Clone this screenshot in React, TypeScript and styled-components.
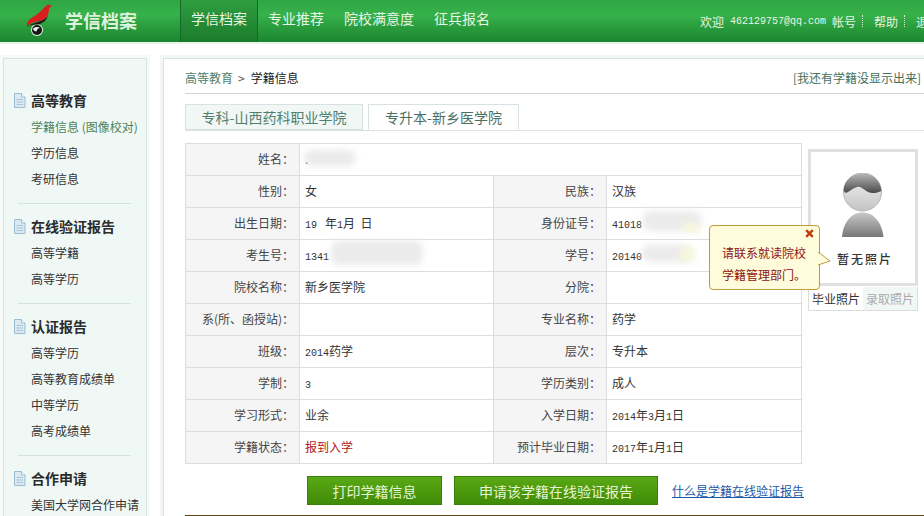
import styled, { createGlobalStyle } from "styled-components";

const sideGroups = [
  { title: "高等教育", items: ["学籍信息 (图像校对)", "学历信息", "考研信息"] },
  { title: "在线验证报告", items: ["高等学籍", "高等学历"] },
  { title: "认证报告", items: ["高等学历", "高等教育成绩单", "中等学历", "高考成绩单"] },
  { title: "合作申请", items: ["美国大学网合作申请"] },
];

const DocIcon = () => (
  <svg width="13" height="15" viewBox="0 0 13 15">
    <path d="M1.5 .5H8.5L12 4V14.5H1.5Z" fill="#dbe9f2" stroke="#9dbdd2" />
    <path d="M8.5 .5V4H12" fill="#fff" stroke="#9dbdd2" />
    <path d="M3.5 6.5H10M3.5 9H10M3.5 11.5H10" stroke="#a9c5d8" />
  </svg>
);

const Logo = () => (
  <svg width="32" height="32" viewBox="0 0 32 32">
    <circle cx="15" cy="26" r="6" fill="#dff0df" />
    <path d="M25 1C27 .5 29 1.5 30 2L27 4C27 9 26 13 21 16C15 18 8 18 5 23C4 16 10 14 14 11C19 8 21 4 25 1Z" fill="#d81e1e" />
    <path d="M5 23C9 19 15 19 21 16C24 14.5 25 13 26 11C25 16 21 20 15 20.5C11 20.8 8 21 5 23Z" fill="#1a1a1a" />
    <circle cx="15" cy="26" r="5" fill="#151515" />
    <path d="M11 25C12.5 22.8 16 22.5 18 24C16 24 15 25.5 14.5 27.5C13 27.5 11.5 26.5 11 25Z" fill="#f2f2f2" />
  </svg>
);

const Avatar = () => (
  <svg width="44" height="64" viewBox="0 0 44 64">
    <defs>
      <linearGradient id="face" x1="0" y1="0" x2="0" y2="1">
        <stop offset="0" stopColor="#f4f4f4" />
        <stop offset="1" stopColor="#c4c4c4" />
      </linearGradient>
      <linearGradient id="hair" x1="0" y1="0" x2="0" y2="1">
        <stop offset="0" stopColor="#b8b8b8" />
        <stop offset="1" stopColor="#4a4a4a" />
      </linearGradient>
      <linearGradient id="torso" x1="0" y1="0" x2="0" y2="1">
        <stop offset="0" stopColor="#c8c8c8" />
        <stop offset="1" stopColor="#777" />
      </linearGradient>
    </defs>
    <circle cx="21.5" cy="19" r="19" fill="url(#face)" stroke="#b5b5b5" />
    <path d="M2.6 17C3.5 7 12 .3 21.5 .3C31 .3 39.5 7 40.4 18C36 20 31 21 27 19C23 17 20 13 16 14C12 15 8 19 5 20C4 19.5 3 18.5 2.6 17Z" fill="url(#hair)" />
    <path d="M1 64C2 50 10 39.5 21.5 39.5C33 39.5 41 50 42.5 64Z" fill="url(#torso)" />
  </svg>
);

const CloseIcon = () => (
  <svg width="9" height="9" viewBox="0 0 9 9">
    <path d="M1.2 1.2L7.8 7.8M7.8 1.2L1.2 7.8" stroke="#c23a10" strokeWidth="2.4" />
  </svg>
);

const TipArrowIcon = () => (
  <svg width="13" height="14" viewBox="0 0 13 14">
    <path d="M0 0L12 9L0 13Z" fill="#fffcdc" />
    <path d="M0 0L12 9L0 13" fill="none" stroke="#c29a3c" />
  </svg>
);

const App = () => {
  const rows = [
    ["性别：", "女", "民族：", "汉族"],
    ["出生日期：", <><Num>19</Num>&nbsp;&nbsp;&nbsp;年<Num>1</Num>月&nbsp;&nbsp;日</>, "身份证号：", <Num>41018</Num>],
    ["考生号：", <Num>1341</Num>, "学号：", <Num>20140</Num>],
    ["院校名称：", "新乡医学院", "分院：", ""],
    ["系(所、函授站)：", "", "专业名称：", "药学"],
    ["班级：", <><Num>2014</Num>药学</>, "层次：", "专升本"],
    ["学制：", <Num>3</Num>, "学历类别：", "成人"],
    ["学习形式：", "业余", "入学日期：", <><Num>2014</Num>年<Num>3</Num>月<Num>1</Num>日</>],
    ["学籍状态：", <Status>报到入学</Status>, "预计毕业日期：", <><Num>2017</Num>年<Num>1</Num>月<Num>1</Num>日</>],
  ];

  return (
    <Page>
      <GlobalStyle />
      <Header>
        <Brand>
          <Logo />
          <BrandName>学信档案</BrandName>
        </Brand>
        <Nav>
          <NavItem $active>学信档案</NavItem>
          <NavItem>专业推荐</NavItem>
          <NavItem>院校满意度</NavItem>
          <NavItem>征兵报名</NavItem>
        </Nav>
        <UserBar>
          <span>欢迎</span>
          <Email>462129757@qq.com</Email>
          <span>帐号</span>
          <Sep />
          <span>帮助</span>
          <Sep />
          <span>退出</span>
        </UserBar>
      </Header>

      <Body>
        <SideOuter>
          <Side>
            {sideGroups.map((group, index) => (
              <SideGroup key={index} $last={index === sideGroups.length - 1}>
                <SideTitle>
                  <DocIcon />
                  {group.title}
                </SideTitle>
                {group.items.map((item, i) => (
                  <SideItem key={i} $active={index === 0 && i === 0}>
                    {item}
                  </SideItem>
                ))}
              </SideGroup>
            ))}
          </Side>
        </SideOuter>

        <MainOuter>
          <Main>
            <Crumbs>
              <CrumbPath>
                高等教育<CrumbArrow>&gt;</CrumbArrow>
                <CrumbCurrent>学籍信息</CrumbCurrent>
              </CrumbPath>
              <MissingLink>[我还有学籍没显示出来]</MissingLink>
            </Crumbs>
            <Tabs>
              <Tab>专科-山西药科职业学院</Tab>
              <Tab $active>专升本-新乡医学院</Tab>
            </Tabs>

            <InfoRow>
              <TableWrap>
                <InfoTable>
                  <colgroup>
                    <col width={114} />
                    <col width={194} />
                    <col width={113} />
                    <col width={195} />
                  </colgroup>
                  <tbody>
                    <tr>
                      <Label>姓名：</Label>
                      <Value colSpan={3}>.</Value>
                    </tr>
                    {rows.map((row, index) => (
                      <tr key={index}>
                        <Label>{row[0]}</Label>
                        <Value>{row[1]}</Value>
                        <Label>{row[2]}</Label>
                        <Value>{row[3]}</Value>
                      </tr>
                    ))}
                  </tbody>
                </InfoTable>
                <Smudge style={{ left: 119, top: 7, width: 52, height: 16 }} />
                <Smudge style={{ left: 458, top: 68, width: 58, height: 20 }} />
                <YellowSmudge style={{ left: 497, top: 80, width: 18, height: 9 }} />
                <Smudge style={{ left: 146, top: 98, width: 92, height: 24 }} />
                <Smudge style={{ left: 457, top: 102, width: 50, height: 17 }} />
                <YellowSmudge style={{ left: 494, top: 104, width: 16, height: 15 }} />
              </TableWrap>

              <PhotoColumn>
                <PhotoFrame>
                  <Avatar />
                  <NoPhoto>暂无照片</NoPhoto>
                </PhotoFrame>
                <PhotoTabs>
                  <PhotoTab $active>毕业照片</PhotoTab>
                  <PhotoTab>录取照片</PhotoTab>
                </PhotoTabs>
                <Tip>
                  <TipClose>
                    <CloseIcon />
                  </TipClose>
                  <TipArrow>
                    <TipArrowIcon />
                  </TipArrow>
                  请联系就读院校
                  <br />
                  学籍管理部门。
                </Tip>
              </PhotoColumn>
            </InfoRow>

            <Actions>
              <ActionButton $width={135}>打印学籍信息</ActionButton>
              <ActionButton $width={204}>申请该学籍在线验证报告</ActionButton>
              <HelpLink>什么是学籍在线验证报告</HelpLink>
            </Actions>
            <BottomRule />
          </Main>
        </MainOuter>
      </Body>
    </Page>
  );
};

export default App;

const cjk = `"Noto Sans CJK SC", "Liberation Sans", sans-serif`;

const GlobalStyle = createGlobalStyle`
  html, body {
    margin: 0;
    padding: 0;
    background: #fff;
    overflow: hidden;
    font-family: ${cjk};
    font-size: 12px;
    color: #333;
  }
`;

const Page = styled.div`
  width: 924px;
  height: 516px;
  overflow: hidden;
`;

const Header = styled.header`
  display: flex;
  height: 42px;
  background: linear-gradient(#2fa544 0%, #37b24a 35%, #2a9c3d 65%, #1b8630 100%);
  box-shadow: 0 2px 0 #e9f6eb;
`;

const Brand = styled.div`
  display: flex;
  align-items: center;
  gap: 11px;
  width: 180px;
  padding: 0 0 2px 22px;
  box-sizing: border-box;
  flex-shrink: 0;
`;

const BrandName = styled.div`
  font-size: 18px;
  font-weight: 700;
  color: #dff2df;
  white-space: nowrap;
`;

const Nav = styled.nav`
  display: flex;
`;

const NavItem = styled.a<{ $active?: boolean }>`
  display: flex;
  align-items: center;
  padding: 0 10px 6px;
  font-size: 14px;
  white-space: nowrap;
  color: #e6f5e6;
  ${({ $active }) =>
    $active &&
    `
    background: linear-gradient(#2f9e40, #1b7c2c);
    border-left: 1px solid #14692a;
    border-right: 1px solid #14692a;
  `}
`;

const UserBar = styled.div`
  display: flex;
  align-items: center;
  gap: 6px;
  width: 224px;
  margin-left: auto;
  flex-shrink: 0;
  overflow: hidden;
  white-space: nowrap;
  color: #e6f5e6;
  font-size: 12px;
  box-sizing: border-box;
`;

const Email = styled.span`
  font-family: "Liberation Mono", monospace;
  font-size: 10px;
`;

const Sep = styled.i`
  display: inline-block;
  height: 12px;
  margin-right: 5px;
  border-left: 1px dotted #d5ecd5;
`;

const Body = styled.div`
  display: flex;
  align-items: flex-start;
  padding-top: 13px;
  gap: 10px;
`;

const SideOuter = styled.div`
  width: 150px;
  flex-shrink: 0;
  padding: 3px 3px 0 3px;
  box-sizing: border-box;
  background: #f5f9f8;
`;

const Side = styled.aside`
  height: 500px;
  padding-top: 29px;
  box-sizing: border-box;
  background: #f0f8f6;
  border: 1px solid #d5e3e3;
  border-bottom: 0;
`;

const SideGroup = styled.div<{ $last?: boolean }>`
  margin: 0 15px 10px 14px;
  padding-bottom: 11px;
  border-bottom: ${({ $last }) => ($last ? "0" : "1px solid #d3e3e3")};
`;

const SideTitle = styled.h3`
  display: flex;
  align-items: center;
  gap: 5px;
  height: 26px;
  margin: 0 0 0 -5px;
  padding-bottom: 2px;
  box-sizing: border-box;
  font-size: 14px;
  font-weight: 700;
  color: #2b2b2b;
  white-space: nowrap;
`;

const SideItem = styled.div<{ $active?: boolean }>`
  height: 26px;
  line-height: 26px;
  margin-left: 13px;
  margin-right: -15px;
  font-size: 12px;
  white-space: nowrap;
  color: ${({ $active }) => ($active ? "#4f8258" : "#333")};
`;

const MainOuter = styled.div`
  flex: 1;
  min-width: 0;
  padding: 3px 0 0 3px;
  background: #f2f7f6;
`;

const Main = styled.main`
  height: 500px;
  padding-left: 21px;
  background: #fff;
  border-left: 1px solid #d5e3e3;
  border-top: 1px solid #d5e3e3;
`;

const Crumbs = styled.div`
  display: flex;
  justify-content: space-between;
  align-items: center;
  height: 35px;
  padding: 2px 3px 0 0;
  box-sizing: border-box;
  border-bottom: 1px solid #cdd6d6;
`;

const CrumbPath = styled.div`
  color: #4f7f6c;
`;

const CrumbArrow = styled.span`
  margin: 0 6px 0 5px;
  color: #555;
`;

const CrumbCurrent = styled.span`
  color: #222;
`;

const MissingLink = styled.a`
  color: #47705a;
`;

const Tabs = styled.div`
  display: flex;
  gap: 5px;
  height: 26px;
  margin-top: 10px;
  border-bottom: 1px solid #d8e2e2;
`;

const Tab = styled.div<{ $active?: boolean }>`
  display: flex;
  align-items: center;
  justify-content: center;
  height: 26px;
  width: ${({ $active }) => ($active ? "151px" : "178px")};
  box-sizing: border-box;
  font-size: 14px;
  border: 1px solid #d8e2e2;
  border-bottom: ${({ $active }) => ($active ? "1px solid #fff" : "1px solid #d8e2e2")};
  background: ${({ $active }) => ($active ? "#fff" : "#f0f7f5")};
  color: ${({ $active }) => ($active ? "#4d6f62" : "#4f8070")};
`;

const InfoRow = styled.div`
  display: flex;
  align-items: flex-start;
  gap: 6px;
  margin-top: 12px;
`;

const TableWrap = styled.div`
  position: relative;
  flex-shrink: 0;
`;

const InfoTable = styled.table`
  width: 617px;
  table-layout: fixed;
  border-collapse: collapse;

  td {
    height: 32px;
    padding: 0 0 2px;
    border: 1px solid #ddd;
    font-size: 12px;
    box-sizing: border-box;
  }
`;

const Label = styled.td`
  padding-right: 5px !important;
  text-align: right;
  background: #f5f5f5;
  color: #444;
  white-space: nowrap;
`;

const Value = styled.td`
  padding-left: 5px !important;
  color: #333;
`;

const Num = styled.span`
  font-family: "Liberation Mono", monospace;
  font-size: 10px;
`;

const Status = styled.span`
  color: #b01818;
`;

const Smudge = styled.div`
  position: absolute;
  border-radius: 8px;
  background: #ebebeb;
  filter: blur(3px);
`;

const YellowSmudge = styled(Smudge)`
  background: #f7f7dc;
`;

const PhotoColumn = styled.div`
  position: relative;
  width: 110px;
  padding-top: 6px;
  flex-shrink: 0;
`;

const PhotoFrame = styled.div`
  display: flex;
  flex-direction: column;
  align-items: center;
  height: 137px;
  padding-top: 21px;
  box-sizing: border-box;
  border: 3px solid #e0e0e0;
  background: #fff;
`;

const NoPhoto = styled.div`
  margin-top: 13px;
  margin-left: 4px;
  font-size: 12px;
  font-weight: 500;
  letter-spacing: 2px;
  color: #333;
  white-space: nowrap;
`;

const PhotoTabs = styled.div`
  display: flex;
  height: 24px;
  margin-top: 1px;
  box-sizing: border-box;
  border: 1px solid #ddd;
  border-top: 0;
`;

const PhotoTab = styled.div<{ $active?: boolean }>`
  flex: 1;
  line-height: 23px;
  text-align: center;
  font-size: 12px;
  white-space: nowrap;
  background: ${({ $active }) => ($active ? "#fff" : "#f1f7f5")};
  color: ${({ $active }) => ($active ? "#333" : "#aaa")};
`;

const Tip = styled.div`
  position: absolute;
  left: -99px;
  top: 82px;
  width: 111px;
  height: 65px;
  padding: 16px 0 0 12px;
  box-sizing: border-box;
  line-height: 22px;
  font-size: 12px;
  white-space: nowrap;
  color: #8e1414;
  background: #fffcdc;
  border: 1px solid #c29a3c;
  border-radius: 4px;
`;

const TipClose = styled.span`
  position: absolute;
  right: 5px;
  top: 3px;
  display: flex;
`;

const TipArrow = styled.span`
  position: absolute;
  left: 108px;
  top: 26px;
  display: flex;
`;

const Actions = styled.div`
  display: flex;
  align-items: center;
  gap: 12px;
  margin-top: 12px;
  padding-left: 122px;
`;

const ActionButton = styled.button<{ $width: number }>`
  width: ${({ $width }) => $width}px;
  height: 29px;
  padding: 0;
  font-family: inherit;
  font-size: 14px;
  color: #e6f5d8;
  background: linear-gradient(#5aa915, #3f8a08);
  border: 1px solid #3b7f0c;
`;

const HelpLink = styled.a`
  margin-left: 2px;
  font-size: 12px;
  color: #1c5aa8;
  text-decoration: underline;
  white-space: nowrap;
`;

const BottomRule = styled.div`
  height: 2px;
  margin-top: 10px;
  background: #5a4216;
`;
